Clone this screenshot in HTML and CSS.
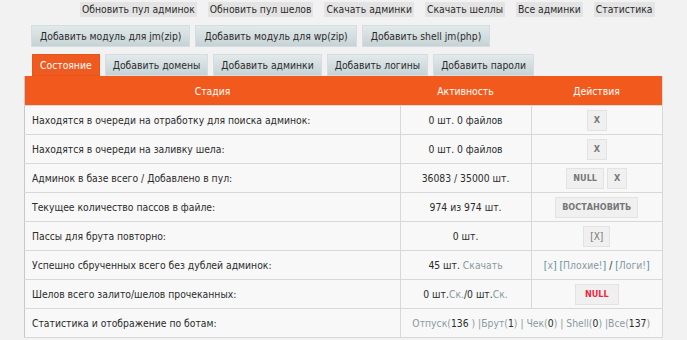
FILE: index.html
```html
<!DOCTYPE html>
<html lang="ru">
<head>
    <meta charset="UTF-8">
    <title>Панель</title>
    <link rel="stylesheet" href="styles.css">
</head>
<body>
    <div class="top-links">
        <a href="#">Обновить пул админок</a>
        <a href="#">Обновить пул шелов</a>
        <a href="#">Скачать админки</a>
        <a href="#">Скачать шеллы</a>
        <a href="#">Все админки</a>
        <a href="#">Статистика</a>
    </div>
    <div class="modules">
        <button class="btn">Добавить модуль для jm(zip)</button>
        <button class="btn">Добавить модуль для wp(zip)</button>
        <button class="btn">Добавить shell jm(php)</button>
    </div>
    <div class="tabs">
        <button class="btn active">Состояние</button>
        <button class="btn">Добавить домены</button>
        <button class="btn">Добавить админки</button>
        <button class="btn">Добавить логины</button>
        <button class="btn">Добавить пароли</button>
    </div>
    <table class="stats">
        <tr>
            <th class="c1">Стадия</th>
            <th class="c2">Активность</th>
            <th class="c3">Действия</th>
        </tr>
        <tr>
            <td>Находятся в очереди на отработку для поиска админок:</td>
            <td class="mid">0 шт. 0 файлов</td>
            <td class="mid"><span class="act">X</span></td>
        </tr>
        <tr>
            <td>Находятся в очереди на заливку шела:</td>
            <td class="mid">0 шт. 0 файлов</td>
            <td class="mid"><span class="act">X</span></td>
        </tr>
        <tr>
            <td>Админок в базе всего / Добавлено в пул:</td>
            <td class="mid">36083 / 35000 шт.</td>
            <td class="mid"><span class="act">NULL</span> <span class="act">X</span></td>
        </tr>
        <tr>
            <td>Текущее количество пассов в файле:</td>
            <td class="mid">974 из 974 шт.</td>
            <td class="mid"><span class="act">ВОСТАНОВИТЬ</span></td>
        </tr>
        <tr>
            <td>Пассы для брута повторно:</td>
            <td class="mid">0 шт.</td>
            <td class="mid"><span class="act plain">[X]</span></td>
        </tr>
        <tr>
            <td>Успешно сбрученных всего без дублей админок:</td>
            <td class="mid">45 шт. <a href="#" class="lnk">Скачать</a></td>
            <td class="mid"><span class="br">[</span><a href="#" class="lnk">x</a><span class="br">]</span> <span class="br">[</span><a href="#" class="lnk">Плохие!</a><span class="br">]</span> / <span class="br">[</span><a href="#" class="lnk">Логи!</a><span class="br">]</span></td>
        </tr>
        <tr>
            <td>Шелов всего залито/шелов прочеканных:</td>
            <td class="mid">0 шт.<a href="#" class="lnk">Ск.</a>/0 шт.<a href="#" class="lnk">Ск.</a></td>
            <td class="mid"><span class="act red">NULL</span></td>
        </tr>
        <tr>
            <td>Статистика и отображение по ботам:</td>
            <td class="mid" colspan="2"><span class="lnk">Отпуск(</span>136 <span class="lnk">) |Брут(</span>1<span class="lnk">) | Чек(</span>0<span class="lnk">) | Shell(</span>0<span class="lnk">) |Все(</span>137<span class="lnk">)</span></td>
        </tr>
    </table>
</body>
</html>
```

FILE: styles.css
```css
body { margin: 0; background: #f2f2f2; font-family: "DejaVu Sans Condensed", "DejaVu Sans", sans-serif; font-size: 10.3px; color: #2b2b2b; }
a { text-decoration: none; color: #2b2b2b; }

.top-links { display: flex; gap: 11px; padding: 2px 0 0 80px; height: 15px; white-space: nowrap; }
.top-links a { background: #e4e4e4; padding: 1px 2px; line-height: 12px; }

.btn { font-family: inherit; font-size: 10.3px; color: #2b2b2b; border: 1px solid #d5dde0; background: linear-gradient(#e2e9ea, #c6d3d6); padding: 0 8px; height: 22px; cursor: pointer; white-space: nowrap; }
.btn.active { background: #ee5a1f; border-color: #e8541a; color: #fff; }
.tabs .btn { padding: 0 7px; }

.modules { display: flex; gap: 5px; padding: 8px 0 0 31px; }
.tabs { display: flex; gap: 5px; padding: 7px 0 0 32px; }

.stats { margin-left: 24px; width: 639px; border-collapse: collapse; background: #f8f8f8; border-left: 1px solid #c8c8c8; border-right: 1px solid #d8d8d8; white-space: nowrap; }
.stats th { background: #f15a1c; color: #fff; font-weight: normal; height: 29px; padding: 0; }
.stats th.c1 { width: 375px; }
.stats th.c2 { width: 131px; }
.stats td { border: 1px solid #d8d8d8; border-left: 0; height: 28px; padding: 0 0 0 7px; }
.stats td.mid { text-align: center; padding: 0; border-left: 1px solid #d8d8d8; }

.act { display: inline-block; background: #f0f0f0; border: 1px solid #e3e3e3; color: #777; font-size: 9px; font-weight: bold; padding: 0 6px; line-height: 19px; }
.act.plain { font-weight: normal; font-size: 10px; }
.act.red { color: #f0263c; padding: 0 9px; }
.lnk { color: #8b9aa1; }
.br { color: #4a8f98; }
```
